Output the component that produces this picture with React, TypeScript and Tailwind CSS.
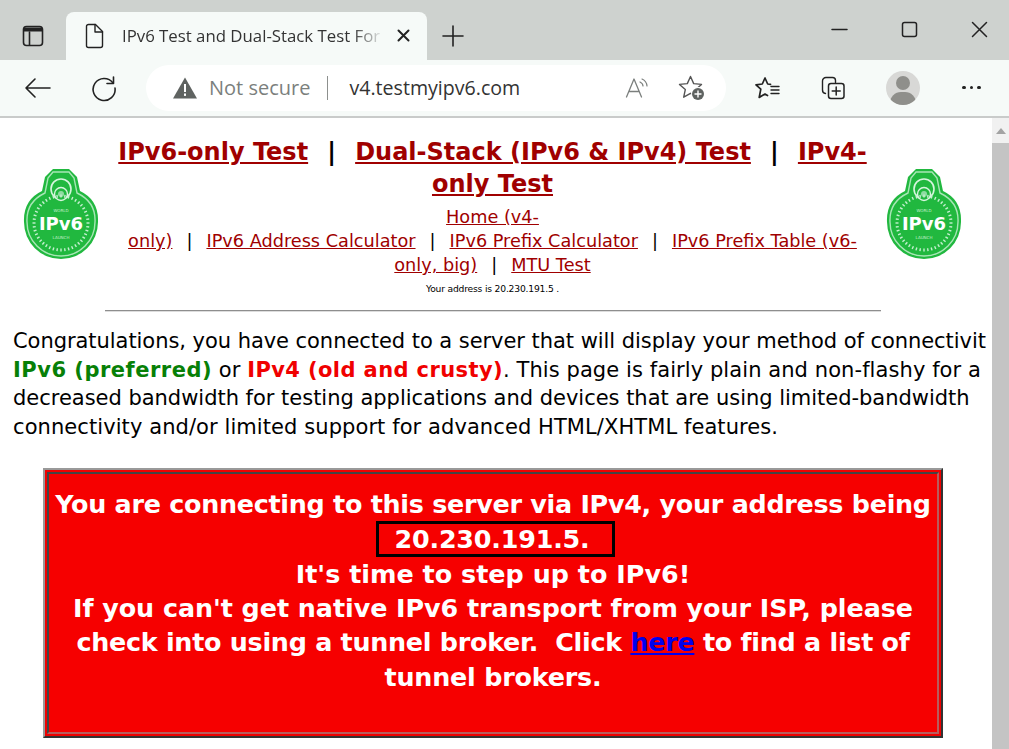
const font = { fontFamily: '"DejaVu Sans", sans-serif' };

function Logo() {
  const beads = Array.from({ length: 44 }, (_, i) => i * (360 / 44));
  return (
    <svg width="76" height="92" viewBox="0 0 76 92" className="shrink-0">
      <path d="M30 1 L46 1 L54 9 L57 23 Q76 32 75 54 A37 37 0 1 1 1 54 Q0 32 19 23 L22 9 Z" fill="#21b83f" />
      <path d="M30 4 L46 4 L51 10 L54 25 Q73 34 72 54 A34 34 0 1 1 4 54 Q3 34 22 25 L25 10 Z" fill="none" stroke="#a8e6b6" strokeWidth="1.4" />
      <circle cx="38" cy="21" r="10" fill="none" stroke="#d7f5de" strokeWidth="1.6" />
      <circle cx="38" cy="26" r="6.5" fill="#21b83f" stroke="#d7f5de" strokeWidth="1.4" />
      <circle cx="38" cy="26" r="3" fill="#8fdca2" />
      {beads.map((a) => (
        <rect key={a} x="37.3" y="26.5" width="1.4" height="3" fill="#c5f0d0" transform={`rotate(${a} 38 55)`} />
      ))}
      <text x="38" y="62" textAnchor="middle" fill="#ffffff" fontSize="18" fontWeight="700" fontFamily="DejaVu Sans, sans-serif">IPv6</text>
      <text x="38" y="44" textAnchor="middle" fill="#c5f0d0" fontSize="4" fontFamily="DejaVu Sans, sans-serif">WORLD</text>
      <text x="38" y="71" textAnchor="middle" fill="#c5f0d0" fontSize="4" fontFamily="DejaVu Sans, sans-serif">LAUNCH</text>
    </svg>
  );
}

function Ico({ w = 24, h = 24, children, className = "" }: { w?: number; h?: number; children: React.ReactNode; className?: string }) {
  return (
    <svg width={w} height={h} viewBox={`0 0 ${w} ${h}`} fill="none" stroke="#222" strokeWidth="1.4" strokeLinecap="round" strokeLinejoin="round" className={`shrink-0 ${className}`}>
      {children}
    </svg>
  );
}

function Chrome() {
  return (
    <div className="shrink-0" style={{ fontFamily: '"Open Sans", sans-serif' }}>
      <div className="h-[60px] bg-[#ced2cf] flex items-end">
        <div className="w-[66px] h-[48px] flex items-center justify-center">
          <Ico>
            <rect x="2.5" y="2.5" width="19" height="19" rx="3" strokeWidth="1.6" />
            <path d="M3 3.5h18v4H3z" fill="#222" stroke="none" />
            <path d="M8.5 8v13" strokeWidth="1.6" />
          </Ico>
        </div>
        <div className="w-[361px] h-[48px] bg-[#f6faf8] rounded-t-[8px] flex items-center pl-[18px]">
          <Ico w={20} h={26}>
            <path d="M2.5 3.5a2 2 0 0 1 2-2h7l7 7v14a2 2 0 0 1-2 2h-12a2 2 0 0 1-2-2z" />
            <path d="M11 1.5v7.5h7.5" />
          </Ico>
          <span className="ml-[18px] w-[262px] whitespace-nowrap text-[16.8px] leading-[20px] text-[#333] [mask-image:linear-gradient(to_right,black_88%,transparent)]">
            IPv6 Test and Dual-Stack Test For
          </span>
          <Ico w={16} h={16} className="ml-[12px]">
            <path d="M2.5 2.5l10 10M12.5 2.5l-10 10" strokeWidth="2" />
          </Ico>
        </div>
        <div className="w-[52px] h-[48px] flex items-center justify-center">
          <Ico>
            <path d="M12 2v20M2 12h20" strokeWidth="1.6" />
          </Ico>
        </div>
        <div className="flex-1" />
        <div className="flex h-[60px] items-center pr-[21px] gap-[53px] pb-[1px]">
          <Ico w={17} h={17}><path d="M1 8.5h15" strokeWidth="1.5" /></Ico>
          <Ico w={17} h={17}><rect x="1.5" y="1.5" width="14" height="14" rx="2" strokeWidth="1.5" /></Ico>
          <Ico w={17} h={17}><path d="M1.5 1.5l14 14M15.5 1.5l-14 14" strokeWidth="1.5" /></Ico>
        </div>
      </div>
      <div className="h-[58px] bg-[#f6faf8] border-b-2 border-[#c9cbca] flex items-center pb-[1px]">
        <div className="w-[146px] flex items-center pl-[24px] shrink-0">
          <Ico w={28} h={24}>
            <path d="M2 12h24M11 3l-9 9 9 9" strokeWidth="1.6" />
          </Ico>
          <Ico w={28} h={28} className="ml-[38px]">
            <path d="M23 9A11 11 0 1 0 25 14" strokeWidth="1.6" />
            <path d="M23.5 3V9.5H17" strokeWidth="1.6" />
          </Ico>
        </div>
        <div className="w-[580px] h-[46px] bg-white rounded-[23px] flex items-center pl-[27px]">
          <svg width="24" height="22" viewBox="0 0 24 22" className="shrink-0"><path d="M12 0.5L24 21.5H0z" fill="#5f6361" /><rect x="11" y="7" width="2" height="8" fill="#fff" /><rect x="11" y="16.5" width="2" height="2.4" fill="#fff" /></svg>
          <span className="ml-[12px] text-[20px] leading-[24px] text-[#7b7f7d] whitespace-nowrap">Not secure</span>
          <span className="ml-[17px] w-[1px] h-[24px] bg-[#8d908e]" />
          <span className="ml-[21px] text-[19.6px] leading-[24px] text-[#333] whitespace-nowrap">v4.testmyipv6.com</span>
          <div className="flex-1" />
          <Ico w={26} h={24}>
            <path d="M1.5 21L9 3l7.5 18M4 15.5h10" stroke="#7b7f7d" strokeWidth="1.3" />
            <path d="M15 6q3 1.5 3 4M17 3q4.5 2 5 7" stroke="#7b7f7d" strokeWidth="1.2" />
          </Ico>
          <Ico w={28} h={26} className="ml-[27px] mr-[20px]">
            <path d="M12.5 1.5L15.7 8.6L23.5 9.4L17.7 14.6L19.3 22.2L12.5 18.3L5.7 22.2L7.3 14.6L1.5 9.4L9.3 8.6Z" stroke="#555" strokeWidth="1.4" />
            <circle cx="20" cy="19" r="7" fill="#fff" stroke="none" />
            <circle cx="20" cy="19" r="6" fill="#5f6361" stroke="none" />
            <path d="M20 16v6M17 19h6" stroke="#fff" strokeWidth="1.4" />
          </Ico>
        </div>
        <div className="w-[29px] shrink-0" />
        <Ico w={26} h={24}>
          <path d="M15.5 8.3L12.7 8L10 2L7.3 8L1 8.8L5.8 13.2L4.2 21.5L10 18L12.5 19.5" strokeWidth="1.7" />
          <path d="M16 10.5h8M16 14h8M16 17.5h8" strokeWidth="1.4" />
        </Ico>
        <Ico w={24} h={24} className="ml-[40px]">
          <path d="M4.5 17.5A3.5 3.5 0 0 1 1.5 14V5a3.5 3.5 0 0 1 3.5-3.5h6.5a3 3 0 0 1 3 3v2" strokeWidth="1.4" />
          <rect x="7.5" y="7.5" width="15.5" height="15" rx="2.5" strokeWidth="1.5" />
          <path d="M15.2 11v8M11.2 15h8" strokeWidth="1.5" />
        </Ico>
        <div className="ml-[41px] w-[34px] h-[34px] rounded-full bg-[#d8d8d6] overflow-hidden relative shrink-0">
          <div className="absolute left-[10px] top-[5px] w-[14px] h-[14px] rounded-full bg-[#8f8f8b]" />
          <div className="absolute left-[4px] top-[21px] w-[26px] h-[22px] rounded-full bg-[#8f8f8b]" />
        </div>
        <div className="ml-[42px] flex gap-[4px]">
          <span className="w-[3.5px] h-[3.5px] rounded-full bg-[#222]" />
          <span className="w-[3.5px] h-[3.5px] rounded-full bg-[#222]" />
          <span className="w-[3.5px] h-[3.5px] rounded-full bg-[#222]" />
        </div>
      </div>
    </div>
  );
}

function Sep() {
  return <span className="inline-block w-[34px] text-center text-black">|</span>;
}

function BigSep() {
  return <span className="inline-block w-[47px] text-center text-black">|</span>;
}

function Header() {
  const A = ({ children }: { children: React.ReactNode }) => <a href="#" className="text-[#a00000] underline">{children}</a>;
  return (
    <div className="flex items-start pl-[23px] pr-[30px] pt-[18px]">
      <div className="pt-[32px] shrink-0"><Logo /></div>
      <div className="flex-1 text-center">
        <div className="font-bold text-[24px] leading-[32px] whitespace-nowrap">
          <div className="flex justify-center"><span><A>IPv6-only Test</A><BigSep /><A>Dual-Stack (IPv6 &amp; IPv4) Test</A><BigSep /><A>IPv4-</A></span></div>
          <div><A>only Test</A></div>
        </div>
        <div className="mt-[5px] text-[17.7px] leading-[24px] whitespace-nowrap">
          <div><A>Home (v4-</A></div>
          <div><A>only)</A><Sep /><A>IPv6 Address Calculator</A><Sep /><A>IPv6 Prefix Calculator</A><Sep /><A>IPv6 Prefix Table (v6-</A></div>
          <div><A>only, big)</A><Sep /><A>MTU Test</A></div>
        </div>
        <div className="text-[9.2px] leading-[14px] mt-[5px] tracking-[-0.2px] text-black">Your address is 20.230.191.5 .</div>
      </div>
      <div className="pt-[32px] shrink-0"><Logo /></div>
    </div>
  );
}

export default function App() {
  return (
    <div className="w-[1009px] h-[749px] overflow-hidden flex flex-col bg-white" style={font}>
      <Chrome />
      <div className="flex flex-1 min-h-0">
        <div className="flex-1 min-w-0 overflow-hidden">
          <Header />
          <div className="mx-[105px] mt-[14px] mb-[15px] h-[2px] bg-[#8e8e8e] w-[776px] border-b border-[#ddd]" />
          <div className="ml-[13px] w-[976px] overflow-hidden text-[21px] leading-[28.5px] text-black whitespace-nowrap">
            <div className="tracking-[-0.05px]">Congratulations, you have connected to a server that will display your method of connectivit</div>
            <div className="tracking-[0.08px]"><b className="text-[#078007] tracking-[0.5px]">IPv6 (preferred)</b> or <b className="text-[#f00000] tracking-[0.4px]">IPv4 (old and crusty)</b>. This page is fairly plain and non-flashy for a</div>
            <div className="tracking-[-0.02px]">decreased bandwidth for testing applications and devices that are using limited-bandwidth</div>
            <div className="tracking-[0.08px]">connectivity and/or limited support for advanced HTML/XHTML features.</div>
          </div>
          <div className="ml-[43px] mt-[27px] w-[900px] h-[270px] border-2 border-t-[#999] border-l-[#999] border-r-[#333] border-b-[#333] p-[2px] bg-[#f00000]">
            <div className="h-full border-2 border-t-[#444] border-l-[#444] border-r-[#b85c5c] border-b-[#b85c5c] bg-[#f60000] pt-[13px] text-center text-white font-bold text-[25.4px] leading-[34.6px] whitespace-nowrap">
              <div className="tracking-[-0.27px]">You are connecting to this server via IPv4, your address being</div>
              <div className="flex justify-center -mt-[1px]">
                <span className="ml-[4px] w-[239px] h-[36px] border-[3px] border-black leading-[30px] block text-left pl-[16px] tracking-[-0.2px]">20.230.191.5.</span>
              </div>
              <div className="tracking-[0.02px]">It's time to step up to IPv6!</div>
              <div className="-mt-[0.4px] tracking-[-0.05px]">If you can't get native IPv6 transport from your ISP, please</div>
              <div className="tracking-[-0.27px]">check into using a tunnel broker.&nbsp; Click <a href="#" className="text-[#0000ee] underline">here</a> to find a list of</div>
              <div className="tracking-[-0.2px]">tunnel brokers.</div>
            </div>
          </div>
        </div>
        <div className="w-[17px] shrink-0 bg-[#f1f1f1] flex flex-col">
          <div className="h-[25px] flex items-center justify-center">
            <div className="w-0 h-0 border-l-[5.5px] border-r-[5.5px] border-b-[6px] border-l-transparent border-r-transparent border-b-[#a3a3a3]" />
          </div>
          <div className="flex-1 bg-[#c4c4c4]" />
        </div>
      </div>
    </div>
  );
}
